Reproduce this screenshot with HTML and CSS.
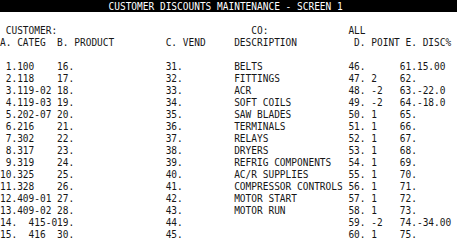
FILE: index.html
```html
<!DOCTYPE html>
<html>
<head>
<meta charset="utf-8">
<link rel="stylesheet" href="styles.css">
</head>
<body>
<div class="frame">
<div class="screen">
  <div class="title">CUSTOMER DISCOUNTS MAINTENANCE - SCREEN 1</div>
  <div class="row"></div>
  <div class="row"><span> CUSTOMER:</span><span></span><span></span><span>   CO:</span><span>ALL</span><span></span></div>
  <div class="row"><span>A. CATEG</span><span>B. PRODUCT</span><span>C. VEND</span><span>DESCRIPTION</span><span> D. POINT</span><span> E. DISC%</span></div>
  <div class="row"></div>
  <div class="row"><span> 1.100</span><span>16.</span><span>31.</span><span>BELTS</span><span>46.</span><span>61.15.00</span></div>
  <div class="row"><span> 2.118</span><span>17.</span><span>32.</span><span>FITTINGS</span><span>47. 2</span><span>62.</span></div>
  <div class="row"><span> 3.119-02</span><span>18.</span><span>33.</span><span>ACR</span><span>48. -2</span><span>63.-22.0</span></div>
  <div class="row"><span> 4.119-03</span><span>19.</span><span>34.</span><span>SOFT COILS</span><span>49. -2</span><span>64.-18.0</span></div>
  <div class="row"><span> 5.202-07</span><span>20.</span><span>35.</span><span>SAW BLADES</span><span>50. 1</span><span>65.</span></div>
  <div class="row"><span> 6.216</span><span>21.</span><span>36.</span><span>TERMINALS</span><span>51. 1</span><span>66.</span></div>
  <div class="row"><span> 7.302</span><span>22.</span><span>37.</span><span>RELAYS</span><span>52. 1</span><span>67.</span></div>
  <div class="row"><span> 8.317</span><span>23.</span><span>38.</span><span>DRYERS</span><span>53. 1</span><span>68.</span></div>
  <div class="row"><span> 9.319</span><span>24.</span><span>39.</span><span>REFRIG COMPONENTS</span><span>54. 1</span><span>69.</span></div>
  <div class="row"><span>10.325</span><span>25.</span><span>40.</span><span>AC/R SUPPLIES</span><span>55. 1</span><span>70.</span></div>
  <div class="row"><span>11.328</span><span>26.</span><span>41.</span><span>COMPRESSOR CONTROLS</span><span>56. 1</span><span>71.</span></div>
  <div class="row"><span>12.409-01</span><span>27.</span><span>42.</span><span>MOTOR START</span><span>57. 1</span><span>72.</span></div>
  <div class="row"><span>13.409-02</span><span>28.</span><span>43.</span><span>MOTOR RUN</span><span>58. 1</span><span>73.</span></div>
  <div class="row"><span class="wide">14.  415-019.</span><span>44.</span><span></span><span>59. -2</span><span>74.-34.00</span></div>
  <div class="row"><span>15.  416</span><span>30.</span><span>45.</span><span></span><span>60. 1</span><span>75.</span></div>
</div>
</div>
</body>
</html>
```
FILE: styles.css
```css
html, body {
  margin: 0;
  padding: 0;
  background: #ffffff;
}
.frame {
  width: 457px;
  height: 249px;
  overflow: hidden;
  position: relative;
}
.screen {
  font-family: "DejaVu Sans Mono", monospace;
  font-size: 10.5px;
  line-height: 12px;
  color: #161616;
  width: 80ch;
  transform: scaleX(0.9036);
  transform-origin: 0 0;
}
.title {
  height: 12px;
  background: #000000;
  color: #ffffff;
  padding-left: 19ch;
  white-space: pre;
}
.row {
  display: grid;
  grid-template-columns: 10ch 19ch 12ch 20ch 9ch 10ch;
  height: 12px;
}
.row span {
  min-width: 0;
  white-space: pre;
}
.row .wide {
  grid-column: span 2;
}
```
